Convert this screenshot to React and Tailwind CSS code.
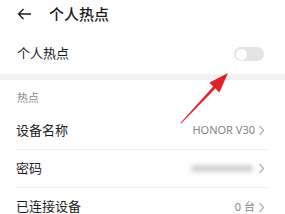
import React from 'react';

function Chevron() {
  return (
    <svg width="7" height="11" viewBox="0 0 7 11" className="ml-[3px]">
      <polyline points="1.5,1 5.5,5.5 1.5,10" fill="none" stroke="#9a9a9a" strokeWidth="1.1" />
    </svg>
  );
}

function Row({ label, children, divider = true }) {
  return (
    <div className={`flex h-[38px] items-center justify-between pr-[2px] ${divider ? 'border-b border-[#ececec]' : ''}`}>
      <span className="text-[13px] text-[#1c1c1c]">{label}</span>
      <div className="flex items-center text-[11px] text-[#858585]">
        {children}
        <Chevron />
      </div>
    </div>
  );
}

export default function App() {
  return (
    <div
      className="relative h-[214px] w-[285px] overflow-hidden bg-white"
      style={{ fontFamily: '"Noto Sans", "Noto Sans CJK SC", sans-serif' }}
    >
      {/* header */}
      <div className="flex h-[28px] items-center pl-[17px]">
        <svg width="15" height="12" viewBox="0 0 15 12">
          <path d="M14 6H1.5M6.5 1L1.5 6l5 5" fill="none" stroke="#222" strokeWidth="1.4" />
        </svg>
        <span className="ml-[17px] text-[15px] font-medium text-[#1a1a1a]">个人热点</span>
      </div>

      {/* hotspot switch */}
      <div className="flex h-[46px] items-center justify-between pl-[17px] pr-[21px] pt-[6px]">
        <span className="text-[13px] text-[#1c1c1c]">个人热点</span>
        <div className="flex h-[14px] w-[30px] items-center rounded-full bg-[#e4e4e4] px-[2px]">
          <div className="h-[11px] w-[11px] rounded-full bg-white" />
        </div>
      </div>

      <div className="h-[6px] bg-[#f1f1f1]" />

      <div className="flex h-[32px] items-end pb-[8px] pl-[17px]">
        <span className="text-[11px] leading-[12px] text-[#8a8a8a]">热点</span>
      </div>

      <div className="pl-[16px] pr-[18px]">
        <Row label="设备名称">HONOR V30</Row>
        <Row label="密码">
          <div className="mr-[2px] h-[7px] w-[62px] rounded-full bg-[#d2d2d2] blur-[2px]" />
        </Row>
        <Row label="已连接设备" divider={false}>0 台</Row>
      </div>

      {/* annotation arrow */}
      <svg className="pointer-events-none absolute left-0 top-0" width="285" height="214" viewBox="0 0 285 214">
        <polygon
          points="181.4,123.3 180.6,122.7 213.2,86.6 209.2,82.8 228,73 219.4,92.4 215.4,88.6"
          fill="#e3202a"
        />
      </svg>
    </div>
  );
}
